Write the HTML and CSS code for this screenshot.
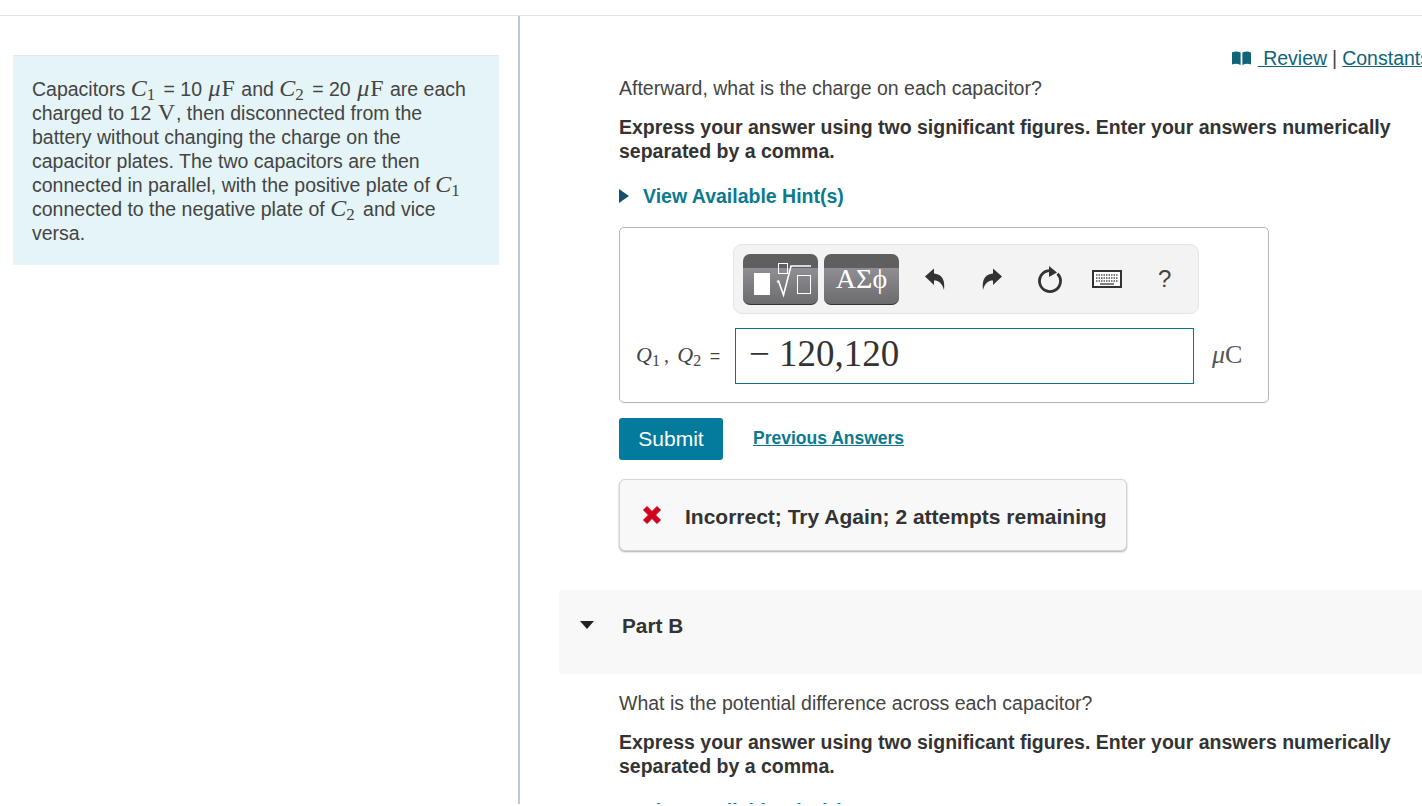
FILE: index.html
```html
<!DOCTYPE html>
<html lang="en">
<head>
  <meta charset="UTF-8">
  <title>Part A</title>
  <link rel="stylesheet" href="styles.css">
</head>
<body>

  <div class="top-bar"></div>

  <div class="page">
    <div class="left-col">
      <div class="intro">
        Capacitors <i class="math">C</i><sub class="idx">1</sub> = 10 <span class="math"><i>μ</i>F</span> and <i class="math">C</i><sub class="idx">2</sub> = 20 <span class="math"><i>μ</i>F</span> are each
        charged to 12 <span class="math">V</span>, then disconnected from the
        battery without changing the charge on the
        capacitor plates. The two capacitors are then
        connected in parallel, with the positive plate of <i class="math">C</i><sub class="idx">1</sub>
        connected to the negative plate of <i class="math">C</i><sub class="idx">2</sub> and vice
        versa.
      </div>
    </div>

    <div class="right-col">
      <div class="links">
        <svg class="book" width="19" height="14" viewBox="0 0 19 14"><path d="M0 1.500Q4-.5 8.600 1.500V14Q4 12 0 13.500ZM10.400 1.500Q15-.5 19 1.500V13.500Q15 12 10.400 14Z" fill="#0f6478"/></svg>
        <a href="#">&nbsp;Review</a> | <a href="#">Constants</a>
      </div>

      <div class="part">
        <p class="question">Afterward, what is the charge on each capacitor?</p>
        <p class="instruct">Express your answer using two significant figures. Enter your answers numerically separated by a comma.</p>
        <div class="hint"><span class="arrow-right"></span><a href="#">View Available Hint(s)</a></div>

        <div class="answer-box">
          <div class="toolbar">
            <div class="tool-btn">
              <svg width="75" height="51" viewBox="0 0 75 51" fill="none" stroke="#fff">
                <rect x="11" y="19" width="16" height="22" fill="#fff" stroke="none"/>
                <rect x="35.500" y="9.500" width="9" height="10"/>
                <path d="M34 28l1.500-1 5 14L48 12h20" stroke-width="1.600"/>
                <rect x="54.500" y="21.500" width="13" height="18"/>
              </svg>
            </div>
            <div class="tool-btn greek">ΑΣϕ</div>
            <div class="tool-icons">
              <svg width="22" height="24" viewBox="0 0 22 24"><path d="M1 9.500 10 1.500V6.500C17 7 21.500 12 20 23 18 16 15 13.500 10 13.500V18Z" fill="#333"/></svg>
              <svg width="22" height="24" viewBox="0 0 22 24"><path d="M21 9.500 12 1.500V6.500C5 7 .5 12 2 23 4 16 7 13.500 12 13.500V18Z" fill="#333"/></svg>
              <svg width="26" height="28" viewBox="0 0 26 28" fill="none"><path d="M12 5.600A10.500 10.500 0 1 0 20.500 8.700" stroke="#333" stroke-width="2.800"/><path d="M12 1 20 7.500 12 12Z" fill="#333"/></svg>
              <svg width="30" height="18" viewBox="0 0 30 18"><rect x="1" y="1" width="28" height="16" fill="#fff" stroke="#333" stroke-width="2"/><path d="M4 5h22M4 8h22M4 11h22" stroke="#555" stroke-width="1.500" stroke-dasharray="1.500 1"/><path d="M8 14h14" stroke="#555" stroke-width="1.500"/></svg>
              <span class="help">?</span>
            </div>
          </div>

          <div class="answer-row">
            <div class="answer-label"><i class="math">Q</i><sub class="idx">1</sub><span class="comma">,</span> <i class="math">Q</i><sub class="idx">2</sub> <span class="eq">=</span></div>
            <div class="answer-input">− 120,120</div>
            <div class="answer-unit"><i>μ</i>C</div>
          </div>
        </div>

        <div class="actions">
          <button class="submit">Submit</button>
          <a class="previous" href="#">Previous Answers</a>
        </div>

        <div class="feedback">
          <svg width="22" height="22" viewBox="0 0 22 22"><path d="M2.500 6 6 2.500 11 7.500 16 2.500 19.500 6 14.500 11 19.500 16 16 19.500 11 14.500 6 19.500 2.500 16 7.500 11Z" fill="#d0021b" stroke="#d0021b" stroke-linejoin="round"/></svg>
          <span class="feedback-text">Incorrect; Try Again; 2 attempts remaining</span>
        </div>
      </div>

      <div class="part-head">
        <span class="arrow-down"></span>
        <span class="part-title">Part B</span>
      </div>

      <div class="part part-next">
        <p class="question">What is the potential difference across each capacitor?</p>
        <p class="instruct">Express your answer using two significant figures. Enter your answers numerically separated by a comma.</p>
        <div class="hint"><span class="arrow-right"></span><a href="#">View Available Hint(s)</a></div>
      </div>
    </div>
  </div>

</body>
</html>
```

FILE: styles.css
```css
html, body {
  margin: 0;
  height: 806px;
  overflow: hidden;
  background-color: #fff;
}

body {
  font-family: 'Liberation Sans', Arial, sans-serif;
  font-size: 19.500px;
  line-height: 24px;
  color: #444;
}

a {
  color: #0f6478;
}

.top-bar {
  height: 15px;
  border-bottom: 1px solid #e2e2e2;
}

.page {
  display: flex;
  height: 788px;
  overflow: hidden;
}

.left-col {
  box-sizing: border-box;
  flex: 0 0 520px;
  padding: 39px 0 0 13px;
  border-right: 2px solid #bccad6;
}

.intro {
  box-sizing: border-box;
  width: 486px;
  height: 210px;
  padding: 21px 19px;
  background-color: #e5f4f6;
  border-top: 1px solid #dcecee;
}

.math {
  font-family: 'Liberation Serif', 'Times New Roman', serif;
  font-size: 24px;
  line-height: 0;
}

span.math {
  margin: 0 1px;
}

.math i {
  margin-right: 1px;
}

.idx {
  margin-right: 3px;
  font-family: 'Liberation Serif', 'Times New Roman', serif;
  font-size: 17px;
  line-height: 0;
  vertical-align: -4px;
}

.right-col {
  flex: 1;
  min-width: 0;
}

.links {
  display: flex;
  justify-content: flex-end;
  align-items: center;
  gap: 5px;
  height: 24px;
  margin: 30px -8px 0 0;
  white-space: nowrap;
}

.book {
  margin-right: 2px;
}

.part {
  padding-left: 99px;
}

.question {
  margin: 6px 0 15px;
}

.instruct {
  margin: 0 20px 0 0;
  font-weight: bold;
  color: #333;
}

.hint {
  display: flex;
  align-items: center;
  margin-top: 21px;
  height: 24px;
  font-weight: bold;
}

.hint a {
  color: #0b7a90;
  text-decoration: none;
}

.arrow-right {
  width: 0;
  height: 0;
  margin-right: 14px;
  border-left: 10px solid #14506b;
  border-top: 7px solid transparent;
  border-bottom: 7px solid transparent;
}

.answer-box {
  box-sizing: border-box;
  width: 650px;
  height: 176px;
  margin-top: 19px;
  padding: 16px 0 0 16px;
  border: 1px solid #b5b5b5;
  border-radius: 5px;
}

.toolbar {
  box-sizing: border-box;
  display: flex;
  align-items: center;
  gap: 6px;
  width: 466px;
  height: 70px;
  margin-left: 97px;
  padding-left: 9px;
  background-color: #f3f3f3;
  border: 1px solid #e4e4e4;
  border-radius: 9px;
}

.tool-btn {
  box-sizing: border-box;
  width: 75px;
  height: 51px;
  border-radius: 7px;
  border-bottom: 1px solid #333;
  background: linear-gradient(#5f5f5f 0, #5f5f5f 28%, #8e8e93 29%, #6c6c6f 100%);
}

.tool-btn svg {
  display: block;
}

.greek {
  padding-top: 7px;
  font-family: 'Liberation Serif', 'Times New Roman', serif;
  font-size: 28px;
  line-height: 36px;
  text-align: center;
  color: #fff;
}

.tool-icons {
  display: grid;
  grid-template-columns: repeat(5, 57.500px);
  align-items: center;
  justify-items: center;
  margin-left: 1px;
}

.help {
  font-size: 24px;
  color: #444;
}

.answer-row {
  display: flex;
  align-items: center;
  margin-top: 14px;
  height: 56px;
}

.answer-label {
  width: 99px;
  white-space: nowrap;
  font-size: 16px;
}

.answer-label .math {
  font-size: 22px;
}

.answer-label .idx {
  font-size: 16px;
  margin-right: 0;
}

.answer-label .comma {
  margin: 0 4px;
  font-family: 'Liberation Serif', serif;
  font-size: 20px;
}

.answer-label .eq {
  margin-left: 4px;
  font-size: 18px;
}

.answer-input {
  box-sizing: border-box;
  width: 459px;
  height: 56px;
  padding-left: 13px;
  border: 1px solid #0d7388;
  font-family: 'Liberation Serif', 'Times New Roman', serif;
  font-size: 37px;
  line-height: 50px;
  color: #333;
}

.answer-unit {
  margin: -3px 0 0 18px;
  font-family: 'Liberation Serif', 'Times New Roman', serif;
  font-size: 26px;
  color: #555;
}

.actions {
  display: flex;
  align-items: center;
  gap: 30px;
  margin-top: 15px;
}

.submit {
  width: 104px;
  height: 42px;
  padding: 0;
  border: none;
  border-radius: 3px;
  background-color: #047b9c;
  color: #fff;
  font-family: inherit;
  font-size: 21px;
}

.previous {
  margin-top: -2px;
  font-size: 17.500px;
  font-weight: bold;
  color: #0b7a90;
}

.feedback {
  box-sizing: border-box;
  display: flex;
  align-items: center;
  gap: 22px;
  width: 508px;
  height: 72px;
  margin-top: 19px;
  padding-left: 21px;
  background-color: #f8f8f8;
  border: 1px solid #d4d4d4;
  border-radius: 6px;
  box-shadow: 0 1px 2px #aaa;
  font-weight: bold;
  color: #333;
}

.feedback-text {
  padding-top: 4px;
  font-size: 21px;
}

.part-head {
  display: flex;
  align-items: flex-start;
  height: 84px;
  margin: 39px 0 0 39px;
  background-color: #f8f8f8;
}

.arrow-down {
  width: 0;
  height: 0;
  margin: 31px 28px 0 21px;
  border-top: 8px solid #222;
  border-left: 7.500px solid transparent;
  border-right: 7.500px solid transparent;
}

.part-title {
  margin-top: 24px;
  font-size: 20.800px;
  font-weight: bold;
  color: #333;
}

.part-next .question {
  margin-top: 17px;
}
```
